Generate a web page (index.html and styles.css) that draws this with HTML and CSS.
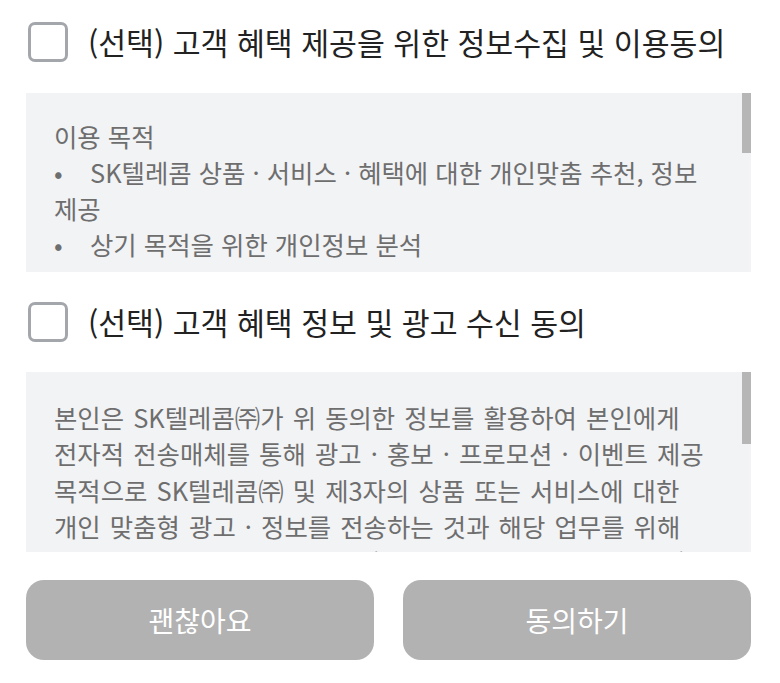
FILE: index.html
```html
<!DOCTYPE html>
<html lang="ko">
<head>
    <meta charset="UTF-8">
    <meta name="viewport" content="width=device-width, initial-scale=1.0">
    <title>선택 약관 동의</title>
    <link rel="stylesheet" href="styles.css">
</head>
<body>
    <div class="page">
        <label class="agree-row">
            <span class="check"></span>
            <span class="agree-title">(선택) 고객 혜택 제공을 위한 정보수집 및 이용동의</span>
        </label>
        <div class="terms terms-first">
            <p>이용 목적</p>
            <p><span class="dot">•</span>SK텔레콤 상품 · 서비스 · 혜택에 대한 개인맞춤 추천, 정보 제공</p>
            <p><span class="dot">•</span>상기 목적을 위한 개인정보 분석</p>
            <div class="thumb thumb-short"></div>
        </div>

        <label class="agree-row">
            <span class="check"></span>
            <span class="agree-title">(선택) 고객 혜택 정보 및 광고 수신 동의</span>
        </label>
        <div class="terms terms-second">
            <p>본인은 SK텔레콤㈜가 위 동의한 정보를 활용하여 본인에게 전자적 전송매체를 통해 광고 · 홍보 · 프로모션 · 이벤트 제공 목적으로 SK텔레콤㈜ 및 제3자의 상품 또는 서비스에 대한 개인 맞춤형 광고 · 정보를 전송하는 것과 해당 업무를 위해 SK텔레콤 대리점 및 고객센터(서비스에이스㈜, 서비스탑㈜)에 위탁하는 것에 동의합니다.</p>
            <div class="thumb thumb-long"></div>
        </div>

        <div class="actions">
            <button class="btn">괜찮아요</button>
            <button class="btn">동의하기</button>
        </div>
    </div>
</body>
</html>
```

FILE: styles.css
```css
body { margin: 0; background: #fff; font-family: "Noto Sans CJK KR", "Noto Sans", sans-serif; }
.page { width: 725px; padding: 22px 0 0 26px; }

.agree-row { display: flex; align-items: center; height: 40px; padding-left: 2px; cursor: pointer; }
.check { width: 34px; height: 34px; border: 3px solid #a3a6aa; border-radius: 7px; flex-shrink: 0; }
.agree-title { margin-left: 20px; font-size: 30.3px; color: #222; line-height: 40px; white-space: nowrap; }

.terms { position: relative; background: #f2f3f5; margin-top: 31px; overflow: hidden; color: #6e6e6e; font-size: 25.4px; line-height: 36px; word-break: keep-all; }
.terms p { margin: 0; }
.terms-first { height: 154px; padding: 25px 32px 0 28px; }
.terms-second { height: 153px; padding: 27px 32px 0 28px; margin-top: 30px; line-height: 36.4px; word-spacing: 2px; }
.dot { display: inline-block; width: 36px; }

.thumb { position: absolute; top: 0; right: 0; width: 9px; background: #b6b6b6; }
.thumb-short { height: 60px; }
.thumb-long { height: 72px; }

.terms-first + .agree-row { margin-top: 30px; }

.actions { display: flex; gap: 29px; margin-top: 28px; }
.btn { flex: 1; height: 80px; border: none; border-radius: 18px; background: #b2b2b2; color: #fff; font-family: inherit; font-size: 28px; cursor: pointer; }
```
